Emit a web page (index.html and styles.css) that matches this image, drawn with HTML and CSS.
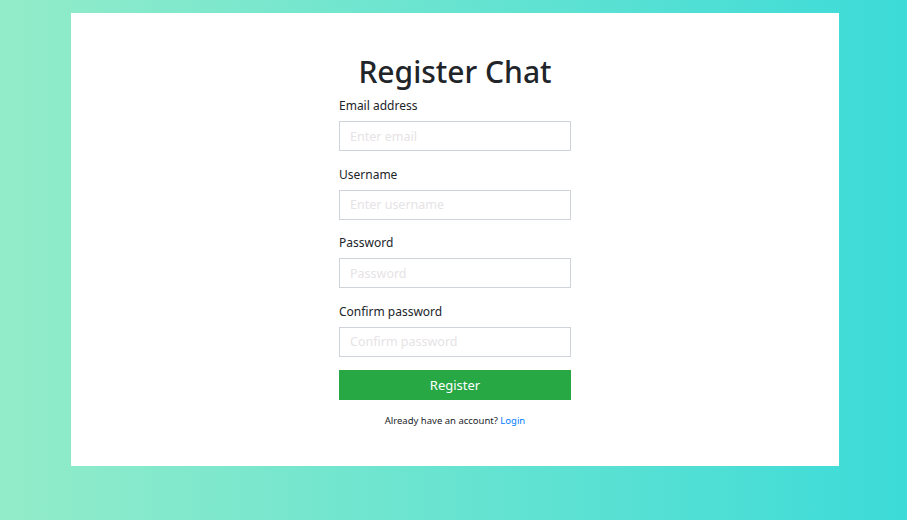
FILE: index.html
```html
<!DOCTYPE html>
<html lang="en">
<head>
<meta charset="utf-8">
<title>Register Chat</title>
<link rel="stylesheet" href="styles.css">
</head>
<body>
<div class="card">
  <form class="form">
    <h1 class="title">Register Chat</h1>
    <div class="group">
      <label class="label" for="email">Email address</label>
      <input class="input" id="email" type="email" placeholder="Enter email">
    </div>
    <div class="group">
      <label class="label" for="username">Username</label>
      <input class="input" id="username" type="text" placeholder="Enter username">
    </div>
    <div class="group">
      <label class="label" for="password">Password</label>
      <input class="input" id="password" type="password" placeholder="Password">
    </div>
    <div class="group">
      <label class="label" for="confirm">Confirm password</label>
      <input class="input" id="confirm" type="password" placeholder="Confirm password">
    </div>
    <button class="btn" type="button">Register</button>
    <p class="note">Already have an account? <a class="link" href="#">Login</a></p>
  </form>
</div>
</body>
</html>
```
FILE: styles.css
```css
html, body {
  margin: 0;
  padding: 0;
}
body {
  min-height: 520px;
  background: linear-gradient(to right, #93ecc9, #3cdbd8);
  font-family: "Segoe UI", "Noto Sans", sans-serif;
  color: #212529;
  padding-top: 13px;
  box-sizing: border-box;
}
.card {
  margin-left: 71px;
  width: 768px;
  height: 453px;
  background: #fff;
  box-sizing: border-box;
  padding-top: 38.5px;
}
.form {
  width: 232px;
  margin: 0 auto;
  display: flex;
  flex-direction: column;
}
.title {
  margin: 0 0 4.5px;
  font-size: 30px;
  line-height: 40px;
  font-weight: 500;
  text-align: center;
  white-space: nowrap;
}
.group {
  display: flex;
  flex-direction: column;
  margin-bottom: 13.67px;
}
.group:last-of-type {
  margin-bottom: 13px;
}
.label {
  font-size: 12px;
  line-height: 20px;
  margin-bottom: 5px;
}
.input {
  height: 30px;
  box-sizing: border-box;
  border: 1px solid #ced4da;
  border-radius: 0;
  padding: 0 10px;
  font-family: inherit;
  font-size: 12.5px;
  color: #495057;
  outline: none;
}
.input::placeholder {
  color: #e6e3e6;
}
.btn {
  height: 30px;
  border: none;
  background: #28a745;
  color: #fff;
  font-family: inherit;
  font-size: 13px;
  padding: 0;
}
.note {
  margin: 14px 0 0;
  text-align: center;
  font-size: 9.5px;
  line-height: 14px;
}
.link {
  color: #007bff;
  text-decoration: none;
}
```
